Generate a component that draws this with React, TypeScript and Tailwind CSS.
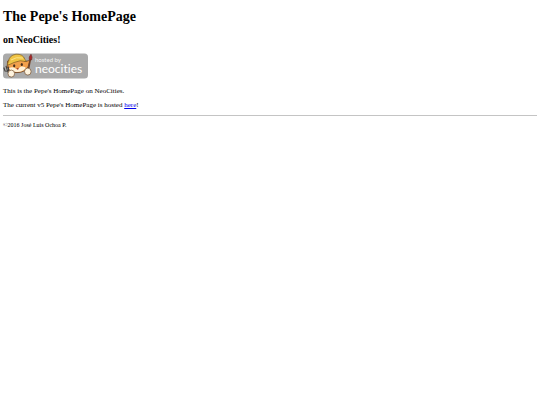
function NeocitiesBadge() {
  return (
    <svg
      viewBox="0 0 85 26"
      className="block h-[26px] w-[85px] [font-variant-ligatures:none]"
      role="img"
      aria-label="Hosted by Neocities"
      fontFamily="Lato, 'Open Sans', sans-serif"
    >
      <rect y=".5" width="85" height="25" rx="3.5" fill="#aaaaaa" />
      {/* cat head */}
      <path d="M4.6 8 L4.2 14 Q7 20 14 19.6 Q22 19.5 25 14 L26.8 7.5 L22 8.5 L18 5 L9 5Z" fill="#f2a04c" stroke="#6b4020" strokeWidth=".8" />
      <path d="M6 15.5 Q8 13.5 11 14.5 L14 16.5 L18 13.5 Q22 13 23 15 Q20 19 14 19 Q8 19 6 15.5Z" fill="#fff2d8" />
      <path d="M5.6 8.5 Q6 2.4 13 1.2 Q20 .8 22 6.5 L23.5 8.6 Q17 6.5 11 9.5 L5 12.2 Q4 10 5.6 8.5Z" fill="#f0c445" stroke="#806020" strokeWidth=".7" />
      <path d="M8 7 Q13 3.5 20 5" fill="none" stroke="#fbe58a" strokeWidth="1" />
      <ellipse cx="11.2" cy="12.8" rx="1.1" ry="1.5" fill="#48301e" />
      <ellipse cx="18.8" cy="11.4" rx="1.1" ry="1.5" fill="#48301e" />
      <path d="M13.4 15.6 L15.8 14.8 L15 17Z" fill="#9c3527" />
      {/* fork and paw */}
      <path d="M.8 14.5 L2 18 L5.6 18.3 M3 12.8 L4.4 17.6 L7.4 24 M5.4 13.4 L5.6 18.3" fill="none" stroke="#46423f" strokeWidth="1.1" />
      <ellipse cx="8.3" cy="20.6" rx="3.3" ry="3.5" fill="#fff4df" stroke="#76502f" strokeWidth=".7" />
      {/* brush and paw */}
      <path d="M27.4 6 L25.2 18" stroke="#704126" strokeWidth="1.5" />
      <path d="M26.2 6.6 Q25.4 4 28 1.2 Q30 4.4 28.6 7Z" fill="#a92828" stroke="#642020" strokeWidth=".5" />
      <ellipse cx="24.8" cy="18.6" rx="3.3" ry="3.5" fill="#fff4df" stroke="#76502f" strokeWidth=".7" />
      <text x="32" y="9" fontSize="6" fill="#f4f4f4">hosted by</text>
      <text x="32" y="20" fontSize="12" fill="#ffffff">neocities</text>
    </svg>
  );
}

export default function App() {
  return (
    <main className="bg-white px-[3px] pt-[9px] font-['Liberation_Serif',serif] text-[7px] leading-2 text-black">
      <h1 className="text-[14px] leading-4 font-bold">The Pepe&apos;s HomePage</h1>
      <h2 className="mt-[9px] text-[10px] leading-3 font-bold">on NeoCities!</h2>
      <div className="mt-[7px]">
        <NeocitiesBadge />
      </div>
      <p className="mt-2">This is the Pepe&apos;s HomePage on NeoCities.</p>
      <p className="mt-[6px]">
        The current v5 Pepe&apos;s HomePage is hosted{" "}
        <a href="#" className="text-[#0000ee] underline">here</a>!
      </p>
      <hr className="mt-[6px] border-t border-[#c4c4c4]" />
      <p className="mt-[6px] text-[6px] leading-[7px]">©2016 José Luis Ochoa P.</p>
    </main>
  );
}
